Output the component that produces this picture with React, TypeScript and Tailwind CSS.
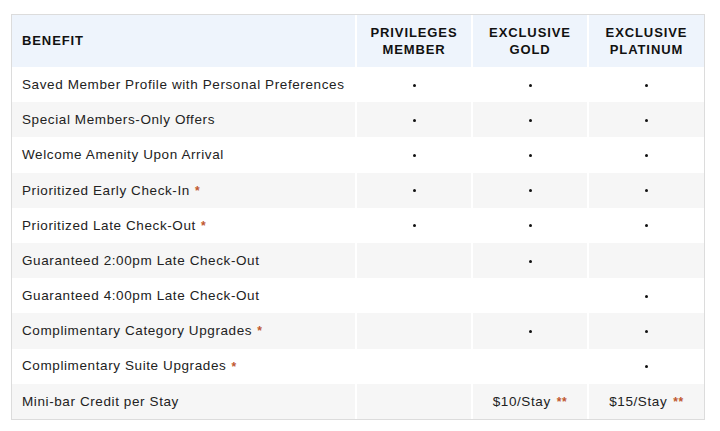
import React from 'react';

type Row = {
  label: string;
  star?: boolean;
  cells: (boolean | string)[];
};

const rows: Row[] = [
  { label: 'Saved Member Profile with Personal Preferences', cells: [true, true, true] },
  { label: 'Special Members-Only Offers', cells: [true, true, true] },
  { label: 'Welcome Amenity Upon Arrival', cells: [true, true, true] },
  { label: 'Prioritized Early Check-In', star: true, cells: [true, true, true] },
  { label: 'Prioritized Late Check-Out', star: true, cells: [true, true, true] },
  { label: 'Guaranteed 2:00pm Late Check-Out', cells: [false, true, false] },
  { label: 'Guaranteed 4:00pm Late Check-Out', cells: [false, false, true] },
  { label: 'Complimentary Category Upgrades', star: true, cells: [false, true, true] },
  { label: 'Complimentary Suite Upgrades', star: true, cells: [false, false, true] },
  { label: 'Mini-bar Credit per Stay', cells: [false, '$10/Stay', '$15/Stay'] },
];

const heads = [
  ['PRIVILEGES', 'MEMBER'],
  ['EXCLUSIVE', 'GOLD'],
  ['EXCLUSIVE', 'PLATINUM'],
];

function Cell({ value, striped }: { value: boolean | string; striped: boolean }) {
  return (
    <div className={`h-[35.2px] flex items-center justify-center pt-[1px] ${striped ? 'bg-[#f6f6f6]' : 'bg-white'}`}>
      {value === true && <span className="w-[3px] h-[3px] rounded-full bg-[#111]" />}
      {typeof value === 'string' && (
        <span>
          {value}
          <span className="ml-[6px] text-[#c0582f] font-bold text-[12px]">**</span>
        </span>
      )}
    </div>
  );
}

export default function App() {
  return (
    <div
      className="w-[720px] h-[431px] bg-white pt-[14px] pl-[11px] text-[13.5px] text-[#222] tracking-[0.6px]"
      style={{ fontFamily: '"Liberation Sans", Arial, sans-serif' }}
    >
      <div className="w-[694px] border border-[#dcdcdc]">
        <div className="grid grid-cols-[343px_114px_114px_115px] gap-x-[2px]">
          {/* Header */}
          <div className="h-[52px] bg-[#eef4fc] flex items-center pl-[10px] text-[13px] font-bold tracking-[0.9px] text-[#111]">
            BENEFIT
          </div>
          {heads.map((h) => (
            <div
              key={h.join()}
              className="h-[52px] bg-[#eef4fc] flex flex-col items-center justify-center text-[13px] font-bold tracking-[0.9px] leading-[17px] text-[#111]"
            >
              <span>{h[0]}</span>
              <span>{h[1]}</span>
            </div>
          ))}

          {/* Rows */}
          {rows.map((r, i) => {
            const striped = i % 2 === 1;
            return (
              <React.Fragment key={r.label}>
                <div className={`h-[35.2px] flex items-center pl-[10px] pt-[1px] ${striped ? 'bg-[#f6f6f6]' : 'bg-white'}`}>
                  {r.label}
                  {r.star && <span className="ml-[5px] text-[#c0582f] font-bold text-[12px]">*</span>}
                </div>
                {r.cells.map((c, j) => (
                  <Cell key={j} value={c} striped={striped} />
                ))}
              </React.Fragment>
            );
          })}
        </div>
      </div>
    </div>
  );
}
